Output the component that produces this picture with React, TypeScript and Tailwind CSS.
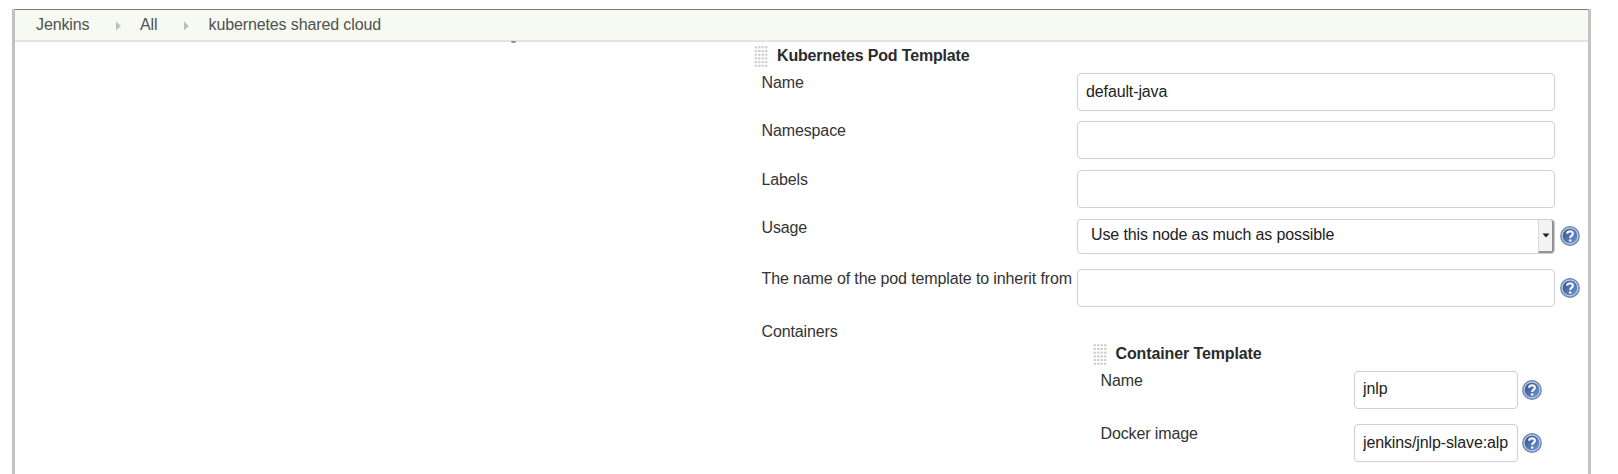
import React from "react";

const Grip = () => (
  <svg width="14" height="22" viewBox="0 0 14 22" className="shrink-0">
    {[0, 1, 2, 3].flatMap((c) =>
      [0, 1, 2, 3, 4, 5].map((r) => (
        <rect key={`${c}-${r}`} x={c * 3.5 + 0.6} y={r * 3.7 + 0.3} width="2.3" height="2" fill="#cbcbcb" />
      ))
    )}
  </svg>
);

const Help = ({ className }: { className: string }) => (
  <svg width="20" height="20" viewBox="0 0 20 20" className={`shrink-0 ${className}`}>
    <defs>
      <linearGradient id="disc" x1="0" y1="0" x2="1" y2="1">
        <stop offset="0" stopColor="#2f4f8f" />
        <stop offset="1" stopColor="#7397cd" />
      </linearGradient>
    </defs>
    <circle cx="10" cy="10" r="9.2" fill="#bccbe3" stroke="#6f87b2" strokeWidth="1.4" />
    <circle cx="10" cy="10" r="7.3" fill="url(#disc)" />
    <path d="M7.1 7.8C7.2 4.5 13 4.5 12.9 7.6C12.8 9.7 10.3 9.6 10.2 12" fill="none" stroke="#f4f7fc" strokeWidth="2.2" />
    <circle cx="10.2" cy="14.5" r="1.3" fill="#f4f7fc" />
  </svg>
);

const Arrow = () => (
  <svg width="5" height="10" viewBox="0 0 5 10" className="mt-px shrink-0">
    <path d="M0 0.5L4.8 5L0 9.5Z" fill="#bcbfba" />
  </svg>
);

const Field = ({ value = "", className }: { value?: string; className: string }) => (
  <input
    type="text"
    defaultValue={value}
    className={`h-[38px] shrink-0 rounded-[4px] border-[1.5px] border-[#cfcfcf] bg-white px-2 pb-px tracking-[-0.12px] text-[#222] outline-none ${className}`}
  />
);

const Row = ({ label, labelWidth, height, children }: { label: string; labelWidth: string; height: string; children?: React.ReactNode }) => (
  <div className={`flex items-start ${height}`}>
    <div className={`shrink-0 whitespace-nowrap ${labelWidth}`}>{label}</div>
    {children}
  </div>
);

export default function App() {
  return (
    <div className="h-[474px] overflow-hidden bg-white pl-3 pt-[9px] font-['Liberation_Sans',Arial,sans-serif] text-[16px] leading-5 tracking-[-0.12px] text-[#333]">
      <div className="h-[465px] w-[1579px] border-x-[3px] border-[#c3c3c3]">
        <nav className="flex h-[33px] items-center border-b-2 border-t border-b-[#e3e6de] border-t-[#777] bg-[#f7faf3] pl-[21px] text-[#4f524d]">
          <span className="w-[80px]">Jenkins</span>
          <Arrow />
          <span className="ml-[19px] w-[44px]">All</span>
          <Arrow />
          <span className="ml-[19.5px]">kubernetes shared cloud</span>
        </nav>
        <div className="ml-[496px] h-[2px] w-[5px] -translate-y-px rounded-b bg-[#8b8b8b]" />

        <main className="pl-[746.5px] pt-[2px]">
          <div className="-ml-[8px] flex h-[27px] items-start gap-[9.5px]">
            <span><Grip /></span>
            <h2 className="font-bold tracking-[-0.16px] text-[#2b2b2b]">Kubernetes Pod Template</h2>
          </div>

          <Row label="Name" labelWidth="w-[315.5px]" height="h-[48.4px]">
            <Field value="default-java" className="w-[478px]" />
          </Row>
          <Row label="Namespace" labelWidth="w-[315.5px]" height="h-[48.6px]">
            <Field className="w-[478px]" />
          </Row>
          <Row label="Labels" labelWidth="w-[315.5px]" height="h-[48.4px]">
            <Field className="w-[478px]" />
          </Row>
          <Row label="Usage" labelWidth="w-[315.5px]" height="h-[50.6px]">
            <button className="mt-[0.6px] flex h-[35px] w-[478px] shrink-0 items-center justify-between rounded-[4px] border-[1.5px] border-[#cfcfcf] bg-white pl-[13px] tracking-[-0.12px] text-[#222]">
              <span className="pb-[2px]">Use this node as much as possible</span>
              <span className="flex h-[33px] w-4 items-center justify-center rounded-r-[3px] border-b-2 border-l border-r-2 border-b-[#929292] border-l-[#d8d8d8] border-r-[#929292] bg-[#f3f3f3]">
                <svg width="8" height="5" viewBox="0 0 8 5"><path d="M0.5 0.5H7.5L4 4.5Z" fill="#222" /></svg>
              </span>
            </button>
            <Help className="ml-[5px] mt-[7.6px]" />
          </Row>
          <Row label="The name of the pod template to inherit from" labelWidth="w-[315.5px]" height="h-[53px]">
            <Field className="w-[478px]" />
            <Help className="ml-[5px] mt-[9px]" />
          </Row>
          <Row label="Containers" labelWidth="w-[339px]" height="h-[152px]">
            <section className="pt-[22px]">
              <div className="-ml-[8px] flex h-[27px] items-start gap-[9px]">
                <span><Grip /></span>
                <h3 className="font-bold tracking-[-0.12px] text-[#2b2b2b]">Container Template</h3>
              </div>
              <Row label="Name" labelWidth="w-[253.5px]" height="h-[53.5px]">
                <Field value="jnlp" className="w-[164px]" />
                <Help className="ml-1 mt-[9px]" />
              </Row>
              <Row label="Docker image" labelWidth="w-[253.5px]" height="h-[40px]">
                <Field value="jenkins/jnlp-slave:alp" className="w-[164px]" />
                <Help className="ml-1 mt-[9px]" />
              </Row>
            </section>
          </Row>
        </main>
      </div>
    </div>
  );
}
